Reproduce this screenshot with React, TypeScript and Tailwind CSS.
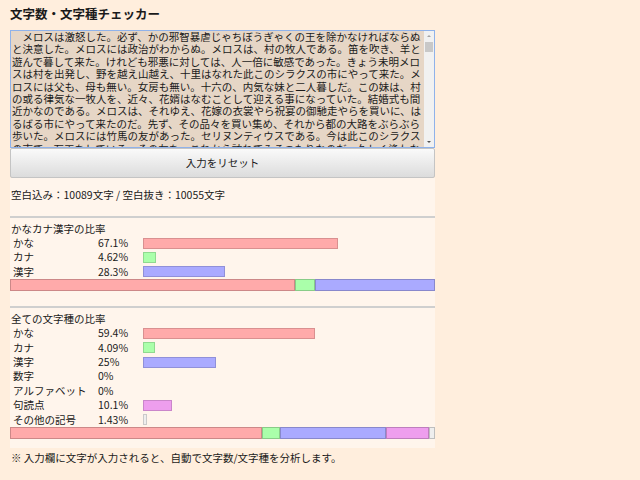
import React from 'react';

const melos =
  '　メロスは激怒した。必ず、かの邪智暴虐じゃちぼうぎゃくの王を除かなければならぬと決意した。メロスには政治がわからぬ。メロスは、村の牧人である。笛を吹き、羊と遊んで暮して来た。けれども邪悪に対しては、人一倍に敏感であった。きょう未明メロスは村を出発し、野を越え山越え、十里はなれた此このシラクスの市にやって来た。メロスには父も、母も無い。女房も無い。十六の、内気な妹と二人暮しだ。この妹は、村の或る律気な一牧人を、近々、花婿はなむことして迎える事になっていた。結婚式も間近かなのである。メロスは、それゆえ、花嫁の衣裳やら祝宴の御馳走やらを買いに、はるばる市にやって来たのだ。先ず、その品々を買い集め、それから都の大路をぶらぶら歩いた。メロスには竹馬の友があった。セリヌンティウスである。今は此このシラクスの市で、石工をしている。その友を、これから訪ねてみるつもりなのだ。久しく逢わなかったのだから、訪ねて行くのが楽しみである。歩いているうちにメロスは、まちの様子を怪しく思った。ひっそりしている。もう既に日も落ちて、まちの暗いのは当りまえだが、けれども、なんだか、夜のせいばかりでは無く、市全体が、やけに寂しい。のんきなメロスも、だんだん不安になって来た。路で逢った若い衆をつかまえて、何かあったのか、二年まえに此の市に来たときは、夜でも皆が歌をうたって、まちは賑やかであった筈だが、と質問した。若い衆は、首を振って答えなかった。';

type Row = { label: string; pct: string; value: number; color: string };

const kanaRows: Row[] = [
  { label: 'かな', pct: '67.1%', value: 67.1, color: 'bg-[#ffaaaa]' },
  { label: 'カナ', pct: '4.62%', value: 4.62, color: 'bg-[#aaffaa]' },
  { label: '漢字', pct: '28.3%', value: 28.3, color: 'bg-[#aaaaff]' },
];

const allRows: Row[] = [
  { label: 'かな', pct: '59.4%', value: 59.4, color: 'bg-[#ffaaaa]' },
  { label: 'カナ', pct: '4.09%', value: 4.09, color: 'bg-[#aaffaa]' },
  { label: '漢字', pct: '25%', value: 25, color: 'bg-[#aaaaff]' },
  { label: '数字', pct: '0%', value: 0, color: 'bg-[#ffddaa]' },
  { label: 'アルファベット', pct: '0%', value: 0, color: 'bg-[#aaeeee]' },
  { label: '句読点', pct: '10.1%', value: 10.1, color: 'bg-[#ee9eee]' },
  { label: 'その他の記号', pct: '1.43%', value: 1.43, color: 'bg-[#eeeeee]' },
];

function RatioTable({ title, rows }: { title: string; rows: Row[] }) {
  return (
    <div>
      <div className="h-[14px] leading-[14px] pl-[1px]">{title}</div>
      {rows.map(r => (
        <div key={r.label} className="grid grid-cols-[88px_45px_1fr] h-[14.4px] leading-[14.4px] items-center">
          <span className="pl-[3px]">{r.label}</span>
          <span>{r.pct}</span>
          <div className="h-[11px] pr-[2px]">
            {r.value > 0 && (
              <div
                className={`h-full border border-black/15 ${r.color}`}
                style={{ width: `${r.value}%` }}
              />
            )}
          </div>
        </div>
      ))}
      <div className="flex h-[12px]">
        {rows.filter(r => r.value > 0).map(r => (
          <div
            key={r.label}
            className={`h-full border border-black/20 ${r.color}`}
            style={{ width: `${r.value}%` }}
          />
        ))}
      </div>
    </div>
  );
}

export default function App() {
  return (
    <div className="min-h-screen bg-[#ffeedd] text-[#1a1a1a] text-[10.5px] font-['Noto_Sans_CJK_JP','Noto_Sans',sans-serif]">
      <div className="w-[425px] ml-[10px]">
        <h1 className="h-[30px] pt-[4px] text-[12.5px] leading-[20px] font-bold">文字数・文字種チェッカー</h1>

        <div className="relative">
          <textarea
            defaultValue={melos}
            className="block w-full h-[118px] resize-none bg-[#e6d6c6] border border-[#8fb2ea] pl-[1px] pr-[11px] py-0 text-[10.5px] leading-[12.4px] text-[#1a1a1a] outline-none [scrollbar-width:none]"
          />
          {/* scrollbar */}
          <div className="absolute right-[1px] top-[1px] bottom-[1px] w-[10px] bg-[#f1f1f1] flex flex-col items-center">
            <svg width="10" height="10" viewBox="0 0 10 10" className="shrink-0">
              <path d="M3 6 L5 4 L7 6 Z" fill="#a3a3a3" />
            </svg>
            <div className="w-[8px] h-[10px] bg-[#c8c8c8] mt-[1px]" />
            <div className="flex-1" />
            <svg width="10" height="10" viewBox="0 0 10 10" className="shrink-0">
              <path d="M3 4 L5 6 L7 4 Z" fill="#505050" />
            </svg>
          </div>
        </div>

        <button className="block w-full h-[30px] border border-[#c4c4c4] rounded-[2px] bg-gradient-to-b from-[#fafafa] to-[#dcdcdc] text-[10.5px] text-[#1a1a1a]">
          入力をリセット
        </button>

        <div className="bg-[#fff5ec] pt-[9px] pb-[9px]">
          <p className="pl-[1px] h-[16px] leading-[16px]">空白込み：10089文字 / 空白抜き：10055文字</p>
          <div className="h-[2px] bg-[#cfcfcf] mt-[13px] mb-[4px]" />
          <RatioTable title="かなカナ漢字の比率" rows={kanaRows} />
          <div className="h-[2px] bg-[#cfcfcf] mt-[15px] mb-[4px]" />
          <RatioTable title="全ての文字種の比率" rows={allRows} />
        </div>

        <p className="pl-[1px] mt-[2px] leading-[16px]">※ 入力欄に文字が入力されると、自動で文字数/文字種を分析します。</p>
      </div>
    </div>
  );
}
